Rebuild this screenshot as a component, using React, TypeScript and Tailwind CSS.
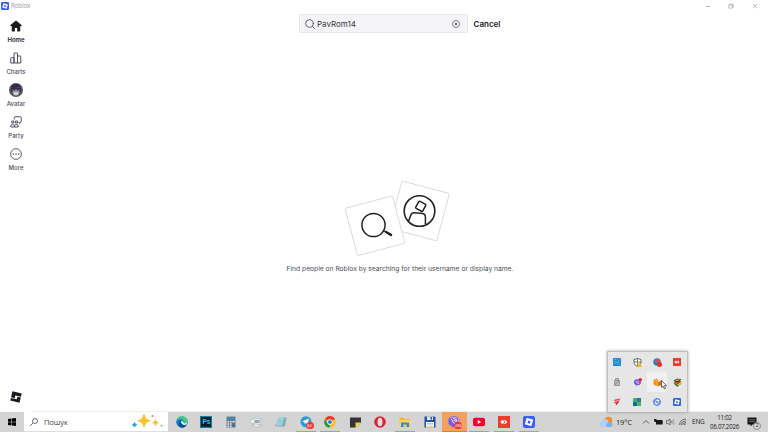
import type { ReactNode } from 'react';

const BrandTile = ({ className }: { className: string }) => (
  <svg className={className} viewBox="0 0 24 24">
    <rect width="24" height="24" rx="4" fill="#335fff" />
    <path fillRule="evenodd" fill="#fff" d="M7.500 3.500l13 3.800-3.800 13.200L3.500 16.700zM10.300 9l-1.200 5 4.800 1.400 1.200-5z" />
  </svg>
);

const HomeIcon = () => (
  <svg className="h-3 w-3" viewBox="0 0 24 24" fill="#191a1f">
    <path d="M12 1.2L.3 10.600l1.500 2 1.700-.8V21a1.8 1.8 0 001.800 1.800h4.400v-6.600h4.600v6.600h4.400a1.800 1.800 0 001.800-1.800v-9.200l1.700.8 1.500-2z" />
  </svg>
);

const ChartsIcon = () => (
  <svg className="h-3 w-3" viewBox="0 0 24 24" fill="none" stroke="#494d5a" strokeWidth="2" strokeLinejoin="round">
    <path d="M1.500 22V12.500a1 1 0 011-1H8V22zM8 22V3a1 1 0 011-1h5a1 1 0 011 1v19zM15 22V8h5.500a1 1 0 011 1v13z" />
  </svg>
);

const AvatarIcon = () => (
  <svg className="h-3.5 w-3.5" viewBox="0 0 28 28">
    <circle cx="14" cy="14" r="14" fill="#51545f" />
    <path d="M4 12C4 5 8 2 14 2s10 3 10 10l-2 8H6z" fill="#2b2d48" />
    <path d="M5 8l8 2 9-3 1 3H5z" fill="#3a4190" />
    <path d="M7 12h14v8l-3 5h-8l-3-5z" fill="#9a9ba4" />
    <path d="M7 12h6v3H7zM15 12h6v3h-6z" fill="#5a2a48" />
    <path d="M10 19h8v4h-8z" fill="#dce5dd" />
  </svg>
);

const PartyIcon = () => (
  <svg className="h-3 w-3" viewBox="0 0 24 24" fill="none" stroke="#494d5a" strokeWidth="1.9" strokeLinejoin="round">
    <path d="M8.500 7V3a1.500 1.500 0 011.500-1.500h11A1.500 1.500 0 0122.500 3v7.500A1.500 1.500 0 0121 12h-1v3l-3-2.500" />
    <path d="M3.500 10h4v4h-4zM11 10h4v4h-4z" />
    <path d="M1.500 22v-2.500a2 2 0 012-2H7a2 2 0 012 2V22zM9 22v-2.500a2 2 0 012-2h3.500a2 2 0 012 2V22z" />
  </svg>
);

const MoreIcon = () => (
  <svg className="h-3 w-3" viewBox="0 0 24 24">
    <circle cx="12" cy="12" r="10.700" fill="none" stroke="#494d5a" strokeWidth="1.800" />
    <g fill="#494d5a">
      <circle cx="6.800" cy="12" r="1.500" />
      <circle cx="12" cy="12" r="1.500" />
      <circle cx="17.200" cy="12" r="1.500" />
    </g>
  </svg>
);

const navItems: { label: string; icon: ReactNode; active?: boolean }[] = [
  { label: 'Home', icon: <HomeIcon />, active: true },
  { label: 'Charts', icon: <ChartsIcon /> },
  { label: 'Avatar', icon: <AvatarIcon /> },
  { label: 'Party', icon: <PartyIcon /> },
  { label: 'More', icon: <MoreIcon /> },
];

const TitleBar = () => (
  <header className="flex h-3 items-center justify-between pl-px pr-2.5">
    <div className="flex items-center gap-[2px]">
      <BrandTile className="h-2 w-2" />
      <span className="font-['Open_Sans',sans-serif] text-[6.2px] leading-3 tracking-[-0.1px] text-[#999]">Roblox</span>
    </div>
    <div className="flex items-center gap-[18px] text-[#999]">
      <svg className="-mr-px h-[6px] w-[6px]" viewBox="0 0 6 6" fill="none" stroke="currentColor" strokeWidth=".6">
        <path d="M.5 3.500h5" />
      </svg>
      <svg className="h-[6px] w-[6px]" viewBox="0 0 6 6" fill="none" stroke="currentColor" strokeWidth=".6">
        <path d="M.8 2h3.400v3.200H.8zM1.800 2V1h3.400v3.200h-1" />
      </svg>
      <svg className="h-[6px] w-[6px]" viewBox="0 0 6 6" fill="none" stroke="currentColor" strokeWidth=".6">
        <path d="M.8.8l4.400 4.400M5.200.8L.8 5.200" />
      </svg>
    </div>
  </header>
);

const Sidebar = () => (
  <nav className="flex w-8 flex-col items-center justify-between pb-[9px] pt-[6px]">
    <div className="flex flex-col">
      {navItems.map((item) => (
        <div key={item.label} className="flex h-8 flex-col items-center">
          <div className="flex h-4 items-center">{item.icon}</div>
          <span
            className={
              item.active
                ? "mt-px font-['Inter',sans-serif] text-[6px] font-semibold leading-2.5 text-[#202227]"
                : "mt-px font-['Inter',sans-serif] text-[6px] font-medium leading-2.5 text-[#494d5a]"
            }
          >
            {item.label}
          </span>
        </div>
      ))}
    </div>
    <svg className="h-3 w-3" viewBox="0 0 24 24" fill="#191a1f">
      <g transform="rotate(13 12 12)">
        <path d="M2.500 2.500h19V9.500H10V14.800H2.500z" />
        <path d="M21.500 10.700V21.500h-19V16H14.500v-5.300z" />
      </g>
    </svg>
  </nav>
);

const SearchHeader = () => (
  <div className="flex items-center gap-[5.500px] pl-[267px] pt-[2px]">
    <div className="flex h-[19px] w-[169px] items-center rounded-[2px] border border-[#e6e7ea] bg-[#f5f5f7] pl-[5px] pr-[7px]">
      <svg className="h-[10px] w-[10px]" viewBox="0 0 20 20" fill="none" stroke="#494d5a" strokeWidth="1.700" strokeLinecap="round">
        <circle cx="9" cy="9" r="7.600" />
        <path d="M14.500 14.500l4.300 4.300" />
      </svg>
      <span className="ml-[2px] flex-1 font-['Inter',sans-serif] text-[8px] leading-3 text-[#33363e]">PavRom14</span>
      <svg className="h-2 w-2" viewBox="0 0 16 16" fill="none" stroke="#494d5a" strokeWidth="1.300">
        <circle cx="8" cy="8" r="7" />
        <path d="M5.500 5.500l5 5M10.500 5.500l-5 5" strokeWidth="1.700" />
      </svg>
    </div>
    <span className="font-['Inter',sans-serif] text-[8px] font-semibold leading-3 text-[#202227]">Cancel</span>
  </div>
);

const EmptyState = () => (
  <div className="flex flex-col items-center pt-[146px]">
    <svg className="mr-[6px] h-[78px] w-[108px] overflow-visible" viewBox="343 179 108 78" fill="none">
      <rect x="394.900" y="186.400" width="49" height="49" rx="1" transform="rotate(15 419.400 210.900)" fill="#fff" stroke="#d8d9dd" strokeWidth=".9" />
      <circle cx="419.500" cy="211" r="15.300" stroke="#202227" strokeWidth="1.600" />
      <rect x="416.700" y="202.300" width="8" height="8" rx="1" transform="rotate(28 420.700 206.300)" stroke="#202227" strokeWidth="1.500" />
      <path d="M408.500 221.500l2.200-6.300q1-2.700 3.800-2.400l8 .8q2.900.4 2.900 3.200v7.500" stroke="#202227" strokeWidth="1.500" />
      <rect x="350.500" y="201.300" width="49" height="49" rx="1" transform="rotate(-15 375 225.800)" fill="#fff" stroke="#d8d9dd" strokeWidth=".9" />
      <circle cx="373.500" cy="225" r="11.600" stroke="#202227" strokeWidth="1.500" />
      <path d="M383 230.300l3.500 1.900" stroke="#202227" strokeWidth="1.300" />
      <path d="M386 232l5 2.900" stroke="#202227" strokeWidth="2.500" strokeLinecap="round" />
    </svg>
    <p className="mt-[6px] font-['Inter',sans-serif] text-[6.700px] leading-3 text-[#494d5a]">
      Find people on Roblox by searching for their username or display name.
    </p>
  </div>
);

const trayIcons: ReactNode[] = [
  <svg key="panel" className="h-2 w-2" viewBox="0 0 16 16">
    <rect width="16" height="16" rx="1" fill="#2589c8" />
    <path d="M2 12l3-5 3 3 5-7M3 3h4M9 12h4" stroke="#7fd0ee" strokeWidth="1.200" fill="none" />
  </svg>,
  <svg key="shield" className="h-[9px] w-[9px]" viewBox="0 0 18 18">
    <path d="M9 1l7 2v5c0 5-3 7-7 9-4-2-7-4-7-9V3z" fill="#fff" stroke="#444" strokeWidth="1.600" />
    <path d="M9 1v16M2 8h14" stroke="#444" strokeWidth="1.300" />
    <path d="M13 8l5 10H8z" fill="#f4b61d" />
  </svg>,
  <svg key="globe" className="h-[9px] w-[9px]" viewBox="0 0 18 18">
    <circle cx="8" cy="8" r="7.500" fill="#2c80b9" />
    <path d="M3 5l4-3 5 3-2 4-5-1z" fill="#5196bf" />
    <circle cx="13" cy="13" r="5" fill="#e82e2b" />
    <path d="M5 7q5-5 9 1" stroke="#e4473e" strokeWidth="4" fill="none" />
  </svg>,
  <svg key="remote" className="h-2 w-2" viewBox="0 0 16 16">
    <rect width="16" height="16" fill="#ef3a2f" />
    <path d="M6 5l3 3-3 3-3-3zM10 5l3 3-3 3-1.500-1.500L10 8 8.500 6.500z" fill="#fff" />
  </svg>,
  <svg key="usb" className="h-2 w-2" viewBox="0 0 16 16">
    <path d="M3 5h10v10H3zM5 5V1h6v4" fill="#bbb" stroke="#8a8a8a" strokeWidth="1.600" />
    <path d="M4 13l8-7" stroke="#777" strokeWidth="1.500" />
  </svg>,
  <svg key="viber" className="h-[9px] w-[9px]" viewBox="0 0 18 18">
    <path d="M3 4q6-3 12 0 2 6-1 9-2 1-4 1l-3 3v-3q-4 0-5-4 0-4 1-6z" fill="#7054df" />
    <path d="M6 6q1 5 6 6M9 6q3 0 3 3" stroke="#fff" strokeWidth="1.400" fill="none" />
    <circle cx="14.500" cy="3.500" r="3.500" fill="#ed1c35" />
  </svg>,
  <svg key="box" className="h-[9px] w-[9px]" viewBox="0 0 18 18">
    <path d="M1 4l6-3 3 3v11l-4 1-5-4z" fill="#f38b18" />
    <path d="M10 8l6-3 1 9-7 3z" fill="#dd7918" />
    <path d="M2 5l6 1v9" stroke="#ffbe60" strokeWidth="1.500" fill="none" />
  </svg>,
  <svg key="layers" className="h-[9px] w-[9px]" viewBox="0 0 18 18">
    <path d="M1 11l8-3 8 3-8 6.500z" fill="#2c3c22" />
    <path d="M1 9.500l8-2 8 1-8 6.500z" fill="#62b53c" />
    <path d="M1 7.500l8-3 8 2-8 5.500z" fill="#dd3334" />
    <path d="M1 5l8-4 8 2-8 6z" fill="#383a2c" />
    <path d="M4 5l6-2.500 4 1L8 6.500z" fill="#a5d63c" />
    <path d="M10 12.500l7-5v3.500l-7 5z" fill="#f0c329" />
  </svg>,
  <svg key="bird" className="h-2 w-2" viewBox="0 0 16 16">
    <path d="M1 4l13-3-3 9-5 5-1-5-4-2 6-1z" fill="#e52539" />
    <path d="M5 6l6-2-4 5" stroke="#fff" strokeWidth="1" fill="none" />
  </svg>,
  <svg key="map" className="h-2 w-2" viewBox="0 0 16 16">
    <path d="M0 0h8v8H0z" fill="#3ba49c" />
    <path d="M8 0h8v8H8z" fill="#2e789b" />
    <path d="M0 8h8v8H0z" fill="#176b88" />
    <path d="M8 8h8v8H8z" fill="#46b66d" />
    <path d="M0 1l15 14" stroke="#39bb75" strokeWidth="3" />
  </svg>,
  <svg key="sync" className="h-2 w-2" viewBox="0 0 16 16">
    <circle cx="8" cy="8" r="6.700" fill="#fff" stroke="#245de3" strokeWidth="2" />
    <path d="M8 3.500a4.500 4.500 0 00-4 6.500M8 12.500a4.500 4.500 0 004-6.500" stroke="#245de3" strokeWidth="1.600" fill="none" />
    <circle cx="8" cy="8" r="2" fill="#3978eb" />
  </svg>,
  <BrandTile key="brand" className="h-2 w-2" />,
];

const TrayPopup = () => (
  <div className="absolute left-[606.5px] top-[351px] grid h-[61px] w-[81.5px] grid-cols-4 grid-rows-3 border border-b-0 border-[#bfbfbf] bg-[#e6e6e6] shadow-[0_0_3px_rgba(0,0,0,0.35)]">
    {trayIcons.map((icon, index) => (
      <div key={index} className={index === 6 ? 'flex items-center justify-center bg-[#f1f1f1]' : 'flex items-center justify-center'}>
        {icon}
      </div>
    ))}
    <svg className="absolute left-[53px] top-[28px] h-[10px] w-[6px]" viewBox="0 0 12 20">
      <path d="M1 1v14l3.300-3 2.400 6 2.600-1-2.500-5.700H11z" fill="#fff" stroke="#222" strokeWidth="1.300" />
    </svg>
  </div>
);

type TaskApp = { name: string; icon: ReactNode; open?: boolean; alert?: boolean };

const taskApps: TaskApp[] = [
  {
    name: 'edge',
    icon: (
      <svg className="h-3 w-3" viewBox="0 0 24 24">
        <circle cx="12" cy="12" r="11.500" fill="#1673ca" />
        <path d="M1 11C2 3 9-1 16 1.500c7 3 9 9 6 12-2 3-7 2-8 0 2-4-1-7-5-7-5 0-8 4-8 4.500z" fill="#33bda3" />
        <path d="M7 1.700q8-3 13 2.300 5 6 2 10-2 2-5 1.500 3-8-3-11-3-2-7-2.800z" fill="#58ca70" />
        <path d="M10 9q-2 5 2 8 4 3 9 .8-3 5.500-9 5.700-7-2-6-9 1-4 4-5.500z" fill="#144a8c" />
        <path d="M10.500 10q4-1 4 3 2 3 8 1l-1.500 3q-5 2-8-.5-4-3-2.500-6.500z" fill="#eef7fa" />
      </svg>
    ),
  },
  {
    name: 'photoshop',
    icon: (
      <div className="flex h-3 w-3 items-center justify-center border border-[#087fa5] bg-[#001e2b] font-['Liberation_Sans',sans-serif] text-[6.500px] font-bold leading-none text-[#30c5ee]">
        Ps
      </div>
    ),
  },
  {
    name: 'calculator',
    icon: (
      <svg className="h-3 w-3" viewBox="0 0 24 24">
        <rect x="3" y="1" width="18" height="22" fill="#6b7e8e" />
        <rect x="4.500" y="2.500" width="15" height="5" fill="#3b89b8" />
        <path d="M5 10h3v3H5zM10 10h3v3h-3zM15 10h4v3h-4zM5 14.500h3v3H5zM10 14.500h3v3h-3zM5 19h3v3H5zM10 19h3v3h-3z" fill="#e5ecf0" />
        <path d="M15 14.500h4V22h-4z" fill="#2672ab" />
      </svg>
    ),
  },
  {
    name: 'keyboard',
    icon: (
      <svg className="h-3 w-3" viewBox="0 0 24 24">
        <path d="M6 4l15 1v13l-15-1z" fill="#e4e9ea" stroke="#a5b0b4" />
        <path d="M1 7l8 1v7l-8-1z" fill="#f3f5f5" stroke="#a5b0b4" />
        <path d="M10 8h9v6h-9z" fill="#95a9b2" />
        <path d="M3 19l9-3 11 3-7 3z" fill="#f5f6f6" stroke="#9ba3a6" />
      </svg>
    ),
  },
  {
    name: 'notes',
    icon: (
      <svg className="h-3 w-3" viewBox="0 0 24 24">
        <path d="M8 2l14 1-4 17-17-2z" fill="#64a9bb" />
        <path d="M8 2l11 1-5 16-13-1z" fill="#a3d5dd" />
        <path d="M1 18l17 2 4-16 1 1-4 17-18-2z" fill="#edf2f2" stroke="#6e8187" strokeWidth=".8" />
        <path d="M8 7l7 1M7 10l7 1M6 13l7 1" stroke="#7db5c2" />
      </svg>
    ),
  },
  {
    name: 'telegram',
    open: true,
    icon: (
      <div className="relative h-3 w-3">
        <svg className="h-3 w-3" viewBox="0 0 24 24">
          <circle cx="12" cy="11.500" r="11" fill="#2a9bd5" />
          <path d="M4 11l14-6-3 13-4-4-2 2v-4z" fill="#fff" />
        </svg>
        <span className="absolute -bottom-[1px] -right-[2px] flex h-[7px] w-[8px] items-center justify-center rounded-full bg-[#ec3c3c] font-['Liberation_Sans',sans-serif] text-[4px] leading-none text-white">64</span>
      </div>
    ),
  },
  {
    name: 'chrome',
    open: true,
    icon: (
      <svg className="h-3 w-3" viewBox="0 0 24 24">
        <circle cx="12" cy="12" r="11.500" fill="#fbc21c" />
        <path d="M12 12L2 6a11.500 11.500 0 0120 0z" fill="#e6392d" />
        <path d="M2 6l7.500 12 2.500 0-1 5.500A11.500 11.500 0 012 6z" fill="#229c4c" />
        <circle cx="12" cy="12" r="5.500" fill="#fff" />
        <circle cx="12" cy="12" r="4.200" fill="#397ee8" />
      </svg>
    ),
  },
  {
    name: 'sticky',
    icon: (
      <svg className="h-[11px] w-[11px]" viewBox="0 0 22 22">
        <path d="M0 1h22v10L12 21H0z" fill="#353535" />
        <path d="M11 11h11L12 22h-1z" fill="#f7d434" />
      </svg>
    ),
  },
  {
    name: 'opera',
    icon: (
      <svg className="h-3 w-3" viewBox="0 0 24 24">
        <circle cx="12" cy="12" r="11.500" fill="#e71933" />
        <ellipse cx="12" cy="12" rx="5" ry="8.500" fill="#dedede" />
      </svg>
    ),
  },
  {
    name: 'explorer',
    open: true,
    icon: (
      <svg className="h-3 w-3" viewBox="0 0 24 24">
        <path d="M1 3h8l2 3h11v15H1z" fill="#eeb535" />
        <path d="M1 8h22v12H1z" fill="#ffd45c" />
        <path d="M4 13h16v9h-5v-5H9v5H4z" fill="#348bd1" />
      </svg>
    ),
  },
  {
    name: 'commander',
    icon: (
      <svg className="h-3 w-3" viewBox="0 0 24 24">
        <path d="M1 1h20l2 2v20H1z" fill="#264ea2" />
        <path d="M6 1h12v7H6z" fill="#d9eafb" />
        <path d="M13 2h3v5h-3z" fill="#264ea2" />
        <path d="M4 12h16v11H4z" fill="#fff" />
        <path d="M6 15h12M6 18h12" stroke="#6c8bc2" />
        <path d="M4 21h16v2H4z" fill="#d8be5a" />
      </svg>
    ),
  },
  {
    name: 'viber',
    alert: true,
    icon: (
      <div className="relative h-3 w-3">
        <svg className="h-3 w-3" viewBox="0 0 24 24">
          <path d="M4 2q8-3 16 0 3 2 3 9t-4 9q-3 1-7 1l-4 3v-4q-6-1-7-5Q0 5 4 2z" fill="#765ae5" />
          <path d="M4.500 4q7.500-2.500 15 0 1.500 2 1.500 7t-3 7.500" stroke="#fff" strokeWidth="1" fill="none" />
          <path d="M7 6q2 9 10 11M11 5q7 0 7 7M11 8q4 0 4 4" stroke="#fff" strokeWidth="1.700" fill="none" />
        </svg>
        <span className="absolute -bottom-[1px] -right-[2px] flex h-[7px] w-[8px] items-center justify-center rounded-full bg-[#eb3435] font-['Liberation_Sans',sans-serif] text-[4px] leading-none text-white">286</span>
      </div>
    ),
  },
  {
    name: 'youtube',
    open: true,
    icon: (
      <svg className="h-3 w-3" viewBox="0 0 24 24">
        <rect y="3.500" width="24" height="17" rx="4" fill="#f50032" />
        <path d="M9.500 8v8l7-4z" fill="#fff" />
      </svg>
    ),
  },
  {
    name: 'anydesk',
    open: true,
    icon: (
      <svg className="h-3 w-3" viewBox="0 0 24 24">
        <rect width="24" height="24" fill="#ef3a2f" />
        <path d="M9 7.500l4.500 4.500L9 16.500 4.500 12zM14 7.500l5 4.500-5 4.500-1.500-1.500 3-3-3-3z" fill="#fff" />
      </svg>
    ),
  },
  { name: 'roblox', open: true, icon: <BrandTile className="h-3 w-3" /> },
];

const appClass = (app: TaskApp) => {
  if (app.alert) return 'relative flex w-[24.8px] items-center justify-center bg-[#f5a15e]';
  return 'relative flex w-[24.8px] items-center justify-center';
};

const Taskbar = () => (
  <footer className="flex h-5 bg-[#d4d4d4] font-['Open_Sans',sans-serif] text-[#222]">
    <div className="flex w-6 items-center justify-center">
      <svg className="h-2 w-2" viewBox="0 0 16 16">
        <path d="M0 2l7-1v6.500H0zM8 .9L16 0v7.500H8zM0 8.500h7V15l-7-1zM8 8.500h8V16l-8-1z" />
      </svg>
    </div>
    <div className="flex w-36 items-center border-b border-[#ddd] bg-white pl-[6px] pr-[4px]">
      <svg className="h-2 w-2" viewBox="0 0 16 16" fill="none" stroke="#333" strokeWidth="1.400">
        <circle cx="10" cy="6" r="5" />
        <path d="M6.500 9.500l-6 6" />
      </svg>
      <span className="ml-[6px] flex-1 text-[7.5px] leading-3 tracking-[-0.1px] text-[#444]">Пошук</span>
      <svg className="h-[15px] w-[32px]" viewBox="132 415 32 15">
        <path d="M144 416q.8 5 5.500 5.700-4.700.7-5.500 5.700-.8-5-5.500-5.700 4.700-.7 5.500-5.700z" fill="#f9c22e" stroke="#f9c22e" strokeWidth="1.500" strokeLinejoin="round" />
        <path d="M155.500 420.500q.5 2.800 3 3.200-2.500.4-3 3.200-.5-2.800-3-3.200 2.500-.4 3-3.200z" fill="#f7bb38" stroke="#f7bb38" strokeWidth=".5" />
        <path d="M134.500 423.500q.4 2 2.200 2.300-1.800.3-2.200 2.300-.4-2-2.200-2.300 1.800-.3 2.200-2.300z" fill="#159fe2" stroke="#159fe2" strokeWidth=".8" />
        <circle cx="152.500" cy="417" r="1" fill="#ef704e" />
        <circle cx="161.500" cy="426.700" r=".9" fill="#68bc5b" />
      </svg>
    </div>
    <div className="ml-[1.200px] flex">
      {taskApps.map((app) => (
        <div key={app.name} className={appClass(app)}>
          {app.icon}
          {app.open && <div className="absolute bottom-0 h-px w-5 bg-[#8fc031]" />}
          {app.alert && <div className="absolute bottom-0 h-px w-full bg-[#f47a12]" />}
        </div>
      ))}
    </div>
    <div className="ml-auto flex shrink-0 items-center pr-[8px]">
      <svg className="h-3 w-[13px] shrink-0" viewBox="0 0 26 24">
        <circle cx="17" cy="9" r="7.500" fill="#f58b29" />
        <path d="M5 22a5 5 0 010-10q2-7 8-5 4 1 5 6 7-1 7 5 0 4-4 4z" fill="#7fb0ec" />
        <path d="M5 22a5 5 0 010-10q2-7 8-5 3 1 4 5-5 1-5 10z" fill="#b5d0f3" />
      </svg>
      <span className="ml-[3.500px] w-[17px] whitespace-nowrap text-[7.5px] leading-3 tracking-[-0.2px]">19°C</span>
      <svg className="ml-[9px] h-2 w-2 shrink-0" viewBox="0 0 16 16" fill="none" stroke="#333" strokeWidth="1.500">
        <path d="M2 11l6-6 6 6" />
      </svg>
      <svg className="ml-[4px] h-2 w-[9px] shrink-0" viewBox="0 0 18 16" fill="#171717">
        <path d="M0 2h5v2h12v9H4V8H1z" />
        <path d="M17 7h1v4h-1z" />
      </svg>
      <svg className="ml-[3px] h-2 w-[9px] shrink-0" viewBox="0 0 18 16" fill="none" stroke="#333" strokeWidth="1.200">
        <path d="M1 5h3l4-3v12l-4-3H1zM10 6q1 2 0 4" />
        <path d="M12.500 4q2 4 0 8M15 2q3 6 0 12" stroke="#888" />
      </svg>
      <svg className="ml-[4px] h-2 w-2 shrink-0" viewBox="0 0 16 16" fill="none" stroke="#333" strokeWidth="1.300">
        <path d="M1 14Q2 2 14 2M4 14Q5 6 14 5.500M7 14Q8 9.500 14 9M10 14q1-2 4-2" />
      </svg>
      <span className="ml-[5px] w-[12px] text-[6.5px] leading-3 tracking-[-0.2px]">ENG</span>
      <div className="ml-[5px] flex w-[31px] flex-col items-center text-[6.200px] leading-[9px] tracking-[-0.25px]">
        <span>11:02</span>
        <span>06.07.2026</span>
      </div>
      <div className="relative ml-[7px] h-3 w-[13px] shrink-0">
        <svg className="h-3 w-3" viewBox="0 0 24 24">
          <path d="M1 3h18v14H11l-4 4v-4H1z" fill="#171717" />
          <path d="M4 7.500h12M4 11h12" stroke="#bbb" />
        </svg>
        <span className="absolute -bottom-[2px] -right-[1px] flex h-[8px] w-[8px] items-center justify-center rounded-full border border-[#888] bg-[#ddd] text-[5.500px] leading-none">2</span>
      </div>
    </div>
  </footer>
);

export default function App() {
  return (
    <div className="relative flex h-[432px] w-[768px] flex-col overflow-hidden bg-white">
      <TitleBar />
      <div className="flex flex-1">
        <Sidebar />
        <main className="flex-1 border-b border-[#ededed]">
          <SearchHeader />
          <EmptyState />
        </main>
      </div>
      <TrayPopup />
      <Taskbar />
    </div>
  );
}
